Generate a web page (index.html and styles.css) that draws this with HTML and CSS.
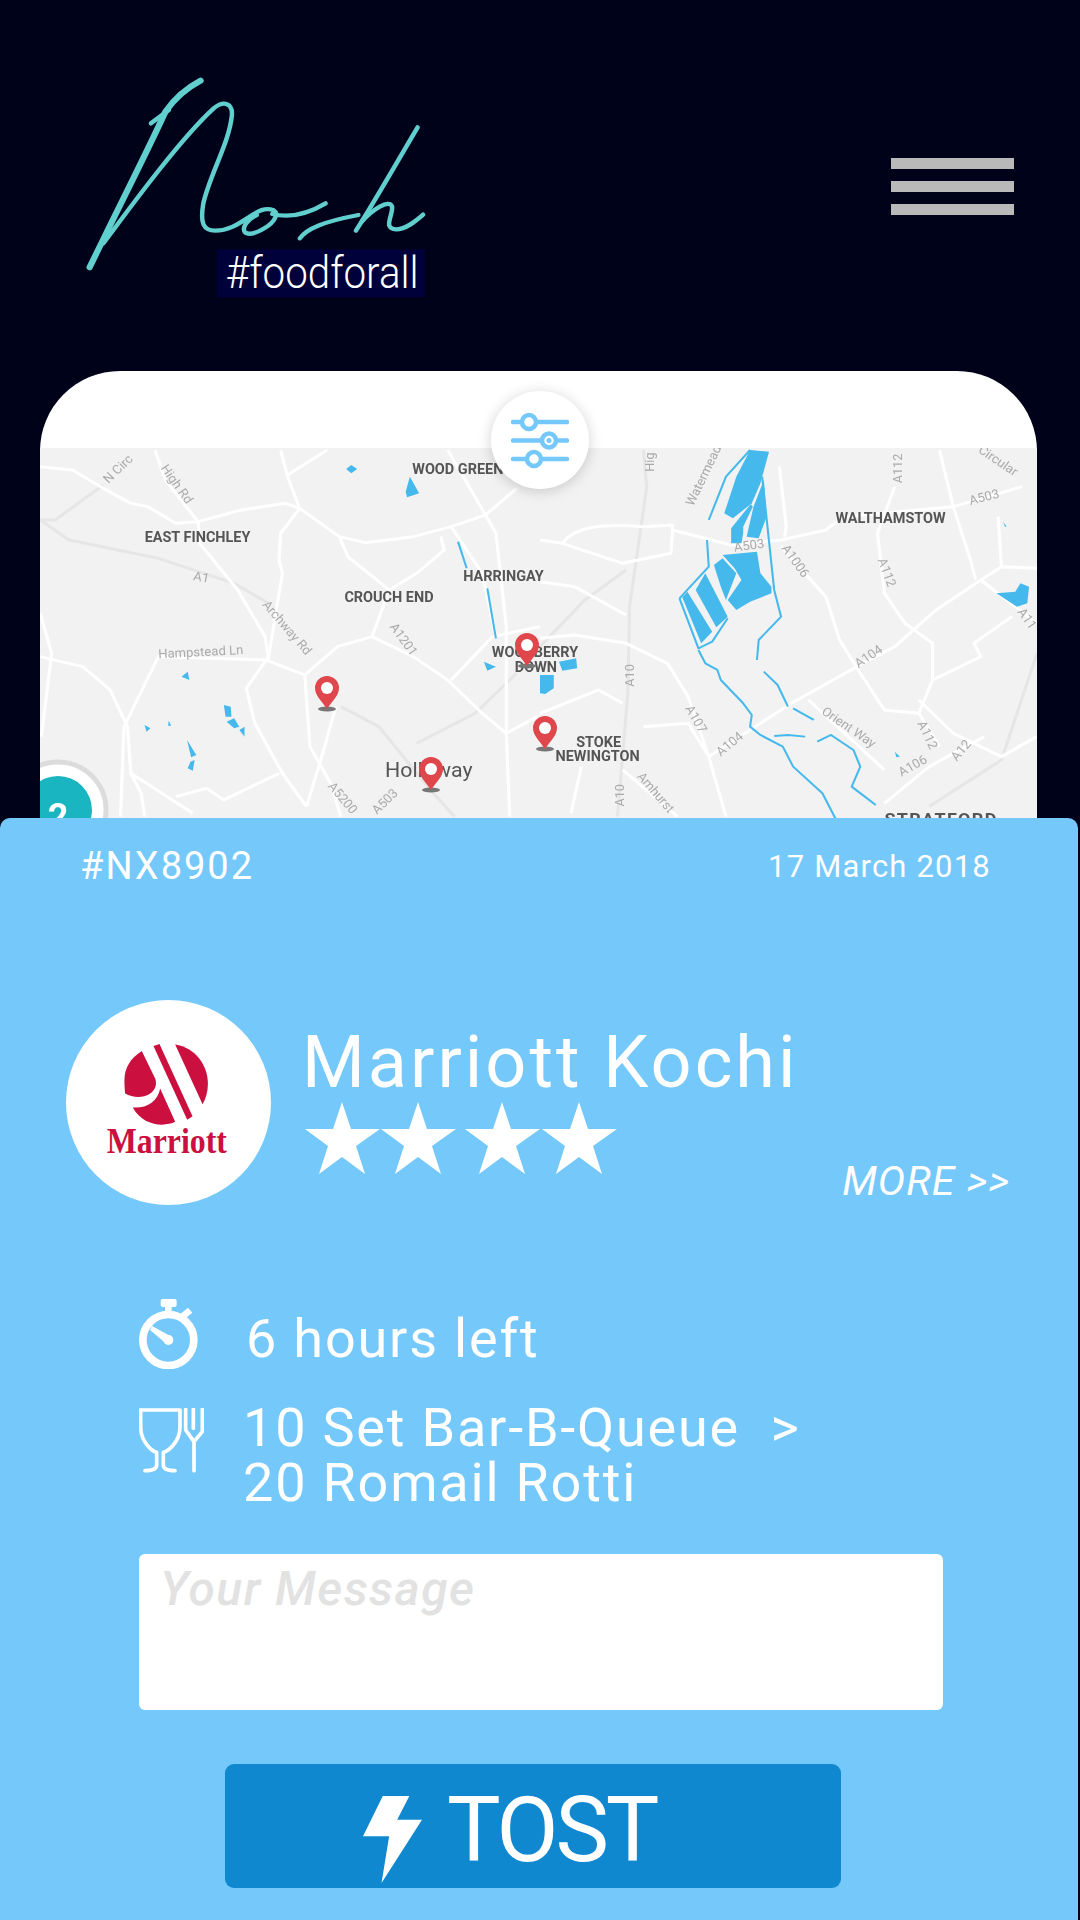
FILE: index.html
```html
<!DOCTYPE html>
<html lang="en">

<head>
    <meta charset="UTF-8">
    <title>Nosh</title>
    <link rel="stylesheet" href="styles.css">
</head>

<body>
    <header class="top">
        <svg class="logo" viewBox="232 105 1045 675" preserveAspectRatio="none">
            <g class="logoLine">
                <path class="thick" d="M260 682C340 510 420 350 480 215C510 170 540 145 582 122" />
                <path d="M438 250L490 210" />
                <path d="M300 610C400 470 530 290 620 205C650 180 675 190 673 225C665 310 610 400 590 490C580 550 590 572 625 572C670 572 700 545 740 520C770 500 810 505 800 530C790 560 730 590 712 578C700 565 715 540 745 525" />
                <path d="M790 522C830 532 880 530 945 490" />
                <path d="M870 595C890 565 940 545 1040 525" />
                <path d="M1212 262C1150 370 1090 480 1033 572" />
                <path d="M1050 545C1080 510 1130 475 1138 500C1140 530 1110 565 1150 568C1180 568 1210 540 1228 524" />
            </g>
            <rect x="630" y="628" width="603" height="144" fill="#00003a" />
            <text class="tag" x="655" y="743" textLength="560" lengthAdjust="spacingAndGlyphs">#foodforall</text>
        </svg>
        <div class="menu"><span></span><span></span><span></span></div>
    </header>

    <section class="mapCard">
        <svg class="map" viewBox="40 448 997 370">
            <rect x="40" y="448" width="997" height="370" fill="#f2f2f2" />

            <!-- left half of the map -->
            <g transform="translate(0 360) scale(.3444 .3333)">
                <g class="roadGrey">
                    <path d="M117 480L200 540L460 595L680 670L780 730" />
                    <path d="M117 480L160 480L300 375" />
                    <path d="M990 1040L1100 1100L1250 1290L1320 1370" />
                    <path d="M1210 1150L1380 1060L1500 940" />
                </g>
                <g class="road">
                    <path d="M117 320L210 330L300 385L380 430L430 440L510 490L575 485L700 450L830 430L870 445L985 530L1060 548L1200 530L1310 500L1410 465L1500 385" />
                    <path d="M450 270L480 360L575 485L580 550L690 690L770 830L780 900" />
                    <path d="M815 270L835 350L870 445L815 520L810 600L820 640L780 890L715 985L740 1090L820 1240L890 1340" />
                    <path d="M835 345L950 270" />
                    <path d="M985 530L1010 590L1130 690L1210 640L1290 570L1280 530" />
                    <path d="M1130 690L1080 830L980 860L885 945L770 900L460 890L360 1100L350 1370" />
                    <path d="M1080 830L1200 890L1300 960L1400 1060L1470 1120L1560 1070" />
                    <path d="M1310 960L1430 830L1568 800" />
                    <path d="M117 890L240 920L320 990L370 1100L380 1240L410 1300L420 1370" />
                    <path d="M117 760L150 880L120 1130" />
                    <path d="M380 1240L560 1360" />
                    <path d="M510 1310L600 1285L650 1320L810 1240" />
                    <path d="M885 945L900 1160L960 1270L990 1370" />
                    <path d="M975 1040L940 1170L890 1340" />
                    <path d="M1300 270L1390 430L1440 520L1470 800L1470 1120L1480 1370" />
                    <path d="M1310 500L1400 640L1440 830" />
                </g>
                <g class="water">
                    <polygon points="1005,327 1020,315 1037,327 1020,340" />
                    <polygon points="1190,350 1217,400 1182,412 1178,395" />
                    <polygon points="527,950 545,935 550,960" />
                    <polygon points="650,1035 670,1040 672,1070 655,1070" />
                    <polygon points="658,1085 680,1075 695,1100 680,1105" />
                    <polygon points="695,1110 710,1100 710,1130" />
                    <polygon points="420,1095 437,1105 425,1115" />
                    <polygon points="490,1082 497,1097 488,1097" />
                    <polygon points="543,1140 570,1185 555,1192" />
                    <polygon points="553,1205 565,1200 560,1232 545,1225" />
                    <polygon points="1405,905 1440,920 1415,932" />
                </g>
                <g class="stream">
                    <path d="M1415 685L1440 835" />
                    <path d="M1330 545L1355 625" />
                </g>
                <text class="place" x="1197" y="342">WOOD GREEN</text>
                <text class="place" x="420" y="547">EAST FINCHLEY</text>
                <text class="place" x="1345" y="663">HARRINGAY</text>
                <text class="place" x="1000" y="726">CROUCH END</text>
                <text class="place" x="1428" y="892">WOODBERRY</text>
                <text class="place" x="1495" y="935">DOWN</text>
                <text class="town" x="1118" y="1250">Holloway</text>
                <text class="street" transform="translate(315 372) rotate(-45)">N Circ</text>
                <text class="street" transform="translate(465 325) rotate(55)">High Rd</text>
                <text class="street" transform="translate(560 660) rotate(10)">A1</text>
                <text class="street" transform="translate(760 735) rotate(50)">Archway Rd</text>
                <text class="street" transform="translate(460 895) rotate(-3)">Hampstead Ln</text>
                <text class="street" transform="translate(1130 800) rotate(55)">A1201</text>
                <text class="street" transform="translate(950 1280) rotate(50)">A5200</text>
                <text class="street" transform="translate(1095 1365) rotate(-45)">A503</text>
            </g>

            <!-- right half of the map -->
            <g transform="translate(540 360) scale(.3444 .3333)">
                <g class="roadGrey">
                    <path d="M300 270L310 380L260 740L255 1000L225 1370" />
                    <path d="M1130 1340L1340 1200L1443 880" />
                    <path d="M0 860L130 720L250 630" />
                </g>
                <g class="road">
                    <path d="M65 550C100 500 180 490 300 500L385 495L385 510L555 555L700 540L830 510L880 470L1200 440L1400 380" />
                    <path d="M0 540L65 550L240 610L380 580L385 510" />
                    <path d="M0 665L100 680L250 765" />
                    <path d="M0 835L100 825L250 850L370 910L430 1010L490 1190L540 1370" />
                    <path d="M0 1060L170 990L240 1030" />
                    <path d="M300 1100L430 1090L490 1190" />
                    <path d="M490 1190L730 1030L920 920L1030 860L1150 750L1280 660L1340 620L1443 625" />
                    <path d="M695 320L715 500L710 530" />
                    <path d="M700 560L830 710L870 840L930 940L1000 1050L1100 1060" />
                    <path d="M1160 270L1200 440L1250 600L1265 660" />
                    <path d="M1030 380L980 520L1000 700L1060 790L1140 850L1140 960L1100 1060L1160 1160" />
                    <path d="M1370 770L1260 850L1280 890L1140 960" />
                    <path d="M780 1020L1000 1230" />
                    <path d="M1100 1020L1200 1120L1340 1190L1443 1130" />
                    <path d="M1000 1330L1130 1220L1290 1130" />
                    <path d="M1330 470L1340 620" />
                    <path d="M1280 660L1443 790" />
                    <path d="M120 1220L90 1360" />
                    <path d="M240 1230L400 1370" />
                </g>
                <g class="water">
                    <polygon points="535,460 570,350 610,270 665,275 640,370 615,430 560,475" />
                    <polygon points="555,550 555,505 612,432 618,440 590,500 590,520 585,550" />
                    <polygon points="600,530 620,440 650,360 658,470 635,535" />
                    <polygon points="530,585 630,575 640,640 672,680 672,700 610,725 570,750 545,720 585,660 565,625" />
                    <polygon points="505,615 530,595 570,640 540,720 525,680" />
                    <polygon points="452,690 480,640 545,770 512,802" />
                    <polygon points="413,712 428,695 500,815 468,850" />
                    <polygon points="55,905 105,895 108,925 65,932" />
                    <polygon points="0,945 40,945 40,985 15,1002 0,1000" />
                    <polygon points="1325,700 1380,695 1395,670 1420,680 1415,730 1385,740" />
                    <polygon points="1030,1175 1045,1190 1035,1192" />
                    <polygon points="1345,485 1355,500 1350,500" />
                </g>
                <g class="stream">
                    <path d="M405 715L460 865L500 845L545 775" />
                    <path d="M490 480L540 350L610 270" />
                    <path d="M405 715L490 620L485 540" />
                    <path d="M645 350L680 690L700 770L635 840L630 900" />
                    <path d="M460 870L480 910L515 930L525 960L590 1030L615 1065L610 1100L640 1125L705 1160L735 1220L820 1300L860 1380" />
                    <path d="M650 935L690 975L720 1040" />
                    <path d="M735 1045L795 1080" />
                    <path d="M680 1128L720 1125L770 1130" />
                    <path d="M805 1145L845 1125L910 1170L930 1220L905 1280L975 1335" />
                </g>
                <text class="place" x="858" y="488">WALTHAMSTOW</text>
                <text class="place" x="105" y="1160">STOKE</text>
                <text class="place" x="45" y="1203">NEWINGTON</text>
                <text class="placeBig" x="1000" y="1395">STRATFORD</text>
                <text class="street" transform="translate(445 440) rotate(-65)">Watermead</text>
                <text class="street" transform="translate(330 335) rotate(-90)">Hig</text>
                <text class="street" transform="translate(565 575) rotate(-8)">A503</text>
                <text class="street" transform="translate(1052 370) rotate(-90)">A112</text>
                <text class="street" transform="translate(1270 275) rotate(35)">Circular</text>
                <text class="street" transform="translate(1250 435) rotate(-15)">A503</text>
                <text class="street" transform="translate(700 565) rotate(55)">A1006</text>
                <text class="street" transform="translate(980 600) rotate(70)">A112</text>
                <text class="street" transform="translate(272 980) rotate(-90)">A10</text>
                <text class="street" transform="translate(420 1045) rotate(60)">A107</text>
                <text class="street" transform="translate(525 1190) rotate(-40)">A104</text>
                <text class="street" transform="translate(925 925) rotate(-35)">A104</text>
                <text class="street" transform="translate(815 1060) rotate(35)">Orient Way</text>
                <text class="street" transform="translate(1095 1090) rotate(65)">A112</text>
                <text class="street" transform="translate(1050 1250) rotate(-30)">A106</text>
                <text class="street" transform="translate(1210 1205) rotate(-50)">A12</text>
                <text class="street" transform="translate(245 1340) rotate(-90)">A10</text>
                <text class="street" transform="translate(280 1250) rotate(50)">Amhurst</text>
                <text class="street" transform="translate(1385 755) rotate(55)">A11</text>
            </g>

            <!-- pins -->
            <defs>
                <g id="pin">
                    <ellipse cx="0" cy="18" rx="9" ry="2.5" fill="#777" />
                    <path d="M0 18C-5 10 -12 5 -12 -3A12 12 0 0 1 12 -3C12 5 5 10 0 18Z" fill="#e0474c" />
                    <circle cx="0" cy="-3" r="6" fill="#fff" />
                </g>
            </defs>
            <use href="#pin" x="327" y="691" />
            <use href="#pin" x="527" y="648" />
            <use href="#pin" x="431" y="772" />
            <use href="#pin" x="545" y="731" />

            <!-- cluster -->
            <circle cx="58" cy="810" r="48" fill="#fff" stroke="#dcdcdc" stroke-width="5" />
            <circle cx="58" cy="810" r="34" fill="#19b5c0" />
            <text class="cluster" x="58" y="829">2</text>
        </svg>

        <button class="filterBtn">
            <svg width="58" height="60" viewBox="0 0 58 60">
                <g class="sliders">
                    <path d="M2 12H56" />
                    <path d="M2 30.500H56" />
                    <path d="M2 49H56" />
                    <circle cx="18" cy="12" r="7" />
                    <circle cx="38" cy="30.500" r="7" />
                    <circle cx="23" cy="49" r="7" />
                </g>
                <circle cx="38" cy="30.500" r="2.500" fill="#75c8fa" />
            </svg>
        </button>
    </section>

    <main class="sheet">
        <div class="meta">
            <span class="orderId">#NX8902</span>
            <span class="orderDate">17 March 2018</span>
        </div>

        <div class="hotel">
            <div class="hotelLogo">
                <svg viewBox="78 90 614 614">
                    <path class="red" d="M405 223C465 232 503 285 503 340C503 365 497 385 487 402Z" />
                    <polygon class="red" points="340,228 358,222 457,438 441,449" />
                    <path class="red" d="M305 243C270 265 253 295 253 330C253 345 254 358 255 370C290 390 340 380 347 345C348 335 347 330 345 325Z" />
                    <path class="red" d="M278 412C320 415 352 395 360 355L405 455C375 470 310 470 278 412Z" />
                    <text class="wordmark" x="200" y="548" textLength="360" lengthAdjust="spacingAndGlyphs">Marriott</text>
                </svg>
            </div>
            <div class="hotelInfo">
                <h1 class="hotelName">Marriott Kochi</h1>
                <div class="hotelRate">
                    <svg class="stars" viewBox="0 0 313 72">
                        <defs>
                            <polygon id="star" points="37,0 46,27 75,27 51,44 60,72 37,55 14,72 23,44 0,27 28,27" />
                        </defs>
                        <use href="#star" x="0" />
                        <use href="#star" x="76" />
                        <use href="#star" x="160" />
                        <use href="#star" x="237" />
                    </svg>
                    <a class="more">MORE &gt;&gt;</a>
                </div>
            </div>
        </div>

        <div class="line timeLine">
            <svg class="iconTime" viewBox="57 57 177 210">
                <circle cx="145" cy="180" r="76.500" fill="none" stroke="#fff" stroke-width="23" />
                <rect x="122" y="57" width="48" height="24" rx="6" fill="#fff" />
                <rect x="135" y="78" width="20" height="18" fill="#fff" />
                <polygon points="181,102 204,83 217,98 194,117" fill="#fff" />
                <circle cx="145" cy="180" r="15" fill="#fff" />
                <polygon points="96,138 90,150 140,192 155,170" fill="#fff" />
            </svg>
            <span>6 hours left</span>
        </div>

        <div class="line foodLine">
            <svg class="iconFood" viewBox="57 385 195 193">
                <g class="foodStroke">
                    <path d="M62 390H180V440C180 490 140 515 130 517V555C130 570 150 572 165 572" />
                    <path d="M62 390V440C62 490 100 515 110 517V555C110 570 90 572 75 572" />
                    <path d="M197 388V450L222 485V572" />
                    <path d="M247 388V455L222 485" />
                    <path d="M220 388V445" />
                </g>
            </svg>
            <span>10 Set Bar-B-Queue &nbsp;&gt;<br>20 Romail Rotti</span>
        </div>

        <textarea class="message" placeholder="Your Message"></textarea>

        <button class="tost">
            <svg width="59" height="87" viewBox="363 165 140 260" preserveAspectRatio="none">
                <polygon points="410,165 473,165 444,236 503,236 407,425 425,285 363,285" fill="#fff" />
            </svg>
            <span>TOST</span>
        </button>
    </main>
</body>

</html>
```

FILE: styles.css
```css
* {
    box-sizing: border-box;
}

body {
    margin: 0;
    width: 1080px;
    height: 1920px;
    overflow: hidden;
    background-color: #00021a;
    font-family: Roboto, sans-serif;
    color: #fff;
}

.top {
    display: flex;
    justify-content: space-between;
    height: 371px;
    padding: 75px 66px 0 80px;
}

.logo {
    width: 360px;
    height: 225px;
}

.logoLine {
    fill: none;
    stroke: #62cfcf;
    stroke-width: 13;
    stroke-linecap: round;
}

.logoLine .thick {
    stroke-width: 18;
}

.tag {
    fill: #fff;
    font-size: 135px;
    font-weight: 300;
}

.menu {
    display: flex;
    flex-direction: column;
    gap: 12px;
    margin-top: 83px;
}

.menu span {
    display: block;
    width: 123px;
    height: 11px;
    background-color: #b9b9b9;
}

.mapCard {
    position: relative;
    width: 997px;
    height: 447px;
    margin-left: 40px;
    padding-top: 77px;
    background-color: #fff;
    border-radius: 80px 80px 0 0;
    overflow: hidden;
}

.map {
    display: block;
    width: 997px;
    height: 370px;
    filter: blur(.5px);
}

.road,
.roadGrey,
.stream {
    fill: none;
    stroke-linejoin: round;
}

.road {
    stroke: #fff;
    stroke-width: 9;
}

.roadGrey {
    stroke: #e6e6e6;
    stroke-width: 9;
}

.water {
    fill: #45b9ec;
}

.stream {
    stroke: #45b9ec;
    stroke-width: 6;
}

.place,
.placeBig {
    fill: #555;
    font-weight: 700;
    font-size: 42px;
}

.placeBig {
    font-size: 52px;
    letter-spacing: 4px;
}

.town {
    fill: #555;
    font-size: 62px;
}

.street {
    fill: #aaa;
    font-size: 38px;
}

.cluster {
    fill: #fff;
    font-size: 36px;
    font-weight: 700;
    text-anchor: middle;
}

.filterBtn {
    position: absolute;
    left: 451px;
    top: 20px;
    display: flex;
    align-items: center;
    justify-content: center;
    width: 98px;
    height: 98px;
    padding: 0;
    border: 0;
    border-radius: 50%;
    background-color: #fff;
    box-shadow: 0 2px 14px rgba(0, 0, 0, .18);
}

.sliders {
    fill: #fff;
    stroke: #75c8fa;
    stroke-width: 4.5;
    stroke-linecap: round;
}

.sheet {
    width: 1078px;
    height: 1102px;
    padding-top: 26px;
    background-color: #75c8fa;
    border-radius: 10px 10px 0 0;
}

.meta {
    display: flex;
    justify-content: space-between;
    align-items: center;
    height: 44px;
    padding: 0 87px 0 80px;
}

.orderId {
    font-size: 38px;
    letter-spacing: 2px;
}

.orderDate {
    font-size: 31px;
    letter-spacing: 1.200px;
}

.hotel {
    display: flex;
    gap: 31px;
    height: 205px;
    margin: 112px 68px 0 66px;
}

.hotelLogo {
    flex: none;
    width: 205px;
    height: 205px;
    border-radius: 50%;
    background-color: #fff;
}

.hotelLogo svg {
    display: block;
    width: 205px;
    height: 205px;
}

.red {
    fill: #cb0f3f;
}

.wordmark {
    fill: #cb0f3f;
    font-family: "Liberation Serif", serif;
    font-weight: 700;
    font-size: 110px;
}

.hotelInfo {
    flex: 1;
}

.hotelName {
    margin: 24px 0 0;
    font-size: 72px;
    font-weight: 400;
    line-height: 78px;
    letter-spacing: 3px;
}

.hotelRate {
    position: relative;
    margin-left: 3px;
}

.stars {
    display: block;
    width: 313px;
    height: 72px;
    fill: #fff;
}

/* hangs lower than the stars */
.more {
    position: absolute;
    right: 0;
    top: 57px;
    font-size: 41px;
    font-style: italic;
    letter-spacing: 1px;
    line-height: 44px;
}

.line {
    display: flex;
    margin-left: 139px;
    font-size: 54px;
    line-height: 55px;
    letter-spacing: 1.800px;
}

.timeLine {
    gap: 48px;
    align-items: center;
    margin-top: 94px;
}

.timeLine span {
    margin-top: 8px;
}

.foodLine {
    gap: 39px;
    align-items: flex-start;
    margin-top: 34px;
}

.foodLine span {
    margin-top: -3px;
}

.iconTime {
    flex: none;
    width: 59px;
    height: 70px;
}

.iconFood {
    flex: none;
    width: 65px;
    height: 65px;
    margin-top: 5px;
}

.foodStroke {
    fill: none;
    stroke: #fff;
    stroke-width: 11;
    stroke-linecap: round;
    stroke-linejoin: round;
}

.message {
    display: block;
    width: 804px;
    height: 156px;
    margin: 44px 0 0 139px;
    padding: 6px 21px;
    border: 0;
    border-radius: 6px;
    background-color: #fff;
    font-family: Roboto, sans-serif;
    font-size: 48px;
    letter-spacing: 1.500px;
    resize: none;
}

.message::placeholder {
    color: #e2e2e2;
    font-style: italic;
    font-weight: 500;
}

.tost {
    display: flex;
    align-items: flex-start;
    gap: 25px;
    width: 616px;
    height: 124px;
    margin: 54px 0 0 225px;
    padding: 32px 0 0 138px;
    border: 0;
    border-radius: 9px;
    background-color: #1088cf;
    color: #fff;
    font-family: Roboto, sans-serif;
    font-size: 90px;
    font-weight: 400;
    line-height: 70px;
    letter-spacing: -3px;
}
```
